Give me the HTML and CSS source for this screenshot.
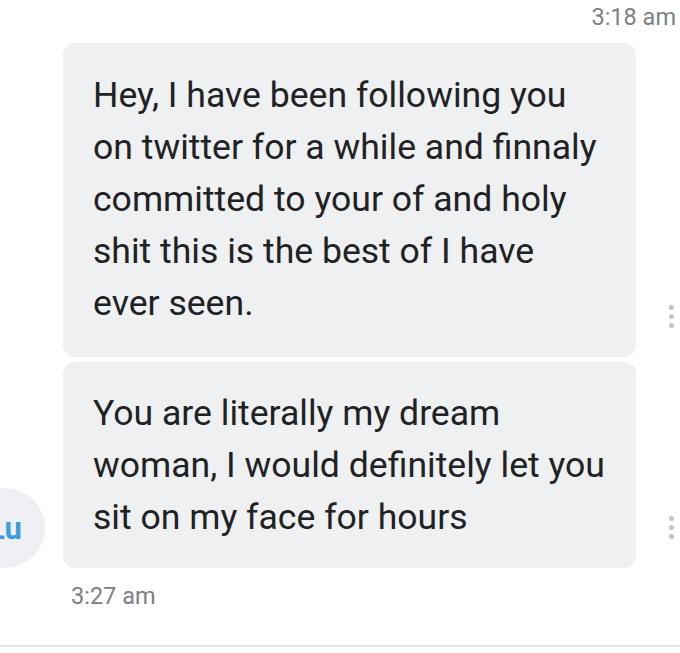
FILE: index.html
```html
<!DOCTYPE html>
<html lang="en">

<head>
  <meta charset="UTF-8">
  <meta name="viewport" content="width=device-width, initial-scale=1.0">
  <title>Messages</title>
  <link rel="stylesheet" href="styles.css">
</head>

<body>
  <div class="thread">
    <div class="time time-top">3:18 am</div>

    <div class="group">
      <div class="avatar-col">
        <div class="avatar">Lu</div>
      </div>

      <div class="bubbles">
        <div class="msg-row">
          <div class="bubble">
            Hey, I have been following you<br>
            on twitter for a while and finnaly<br>
            committed to your of and holy<br>
            shit this is the best of I have<br>
            ever seen.
          </div>
          <div class="menu"><span></span><span></span><span></span></div>
        </div>

        <div class="msg-row">
          <div class="bubble">
            You are literally my dream<br>
            woman, I would definitely let you<br>
            sit on my face for hours
          </div>
          <div class="menu"><span></span><span></span><span></span></div>
        </div>
      </div>
    </div>

    <div class="time time-bottom">3:27 am</div>
  </div>
</body>

</html>
```

FILE: styles.css
```css
body {
  margin: 0;
  background: #ffffff;
  font-family: Roboto, "Noto Sans", sans-serif;
}

.thread {
  height: 645px;
  border-bottom: 2px solid #e3e3e4;
  overflow: hidden;
}

.time {
  font-size: 23.5px;
  line-height: 27px;
  color: #7b8087;
}

.time-top {
  text-align: right;
  padding: 4px 4px 12px 0;
}

.time-bottom {
  padding: 15px 0 0 71px;
}

.group {
  display: flex;
  align-items: flex-end;
}

.avatar-col {
  width: 63px;
  flex: none;
  display: flex;
  justify-content: flex-end;
  padding-right: 18px;
  box-sizing: border-box;
}

.avatar {
  width: 80px;
  height: 80px;
  flex: none;
  border-radius: 50%;
  background: #eef0f3;
  color: #3d9de0;
  font-size: 31px;
  font-weight: bold;
  display: flex;
  align-items: center;
  justify-content: center;
}

.bubbles {
  flex: 1;
  display: flex;
  flex-direction: column;
  gap: 5px;
}

.msg-row {
  display: flex;
  align-items: flex-end;
}

.bubble {
  width: 573px;
  box-sizing: border-box;
  padding: 25px 30px 25px 30px;
  background: #eff0f2;
  border-radius: 12px;
  font-size: 35.6px;
  line-height: 52px;
  color: #212223;
}

.msg-row:first-child .bubble {
  padding-top: 26px;
  padding-bottom: 28px;
}

.menu {
  flex: 1;
  display: flex;
  flex-direction: column;
  align-items: center;
  gap: 4px;
  padding: 0 0 29px 27px;
}

.menu span {
  width: 5px;
  height: 5px;
  border-radius: 50%;
  background: #c2c4c6;
}
```
